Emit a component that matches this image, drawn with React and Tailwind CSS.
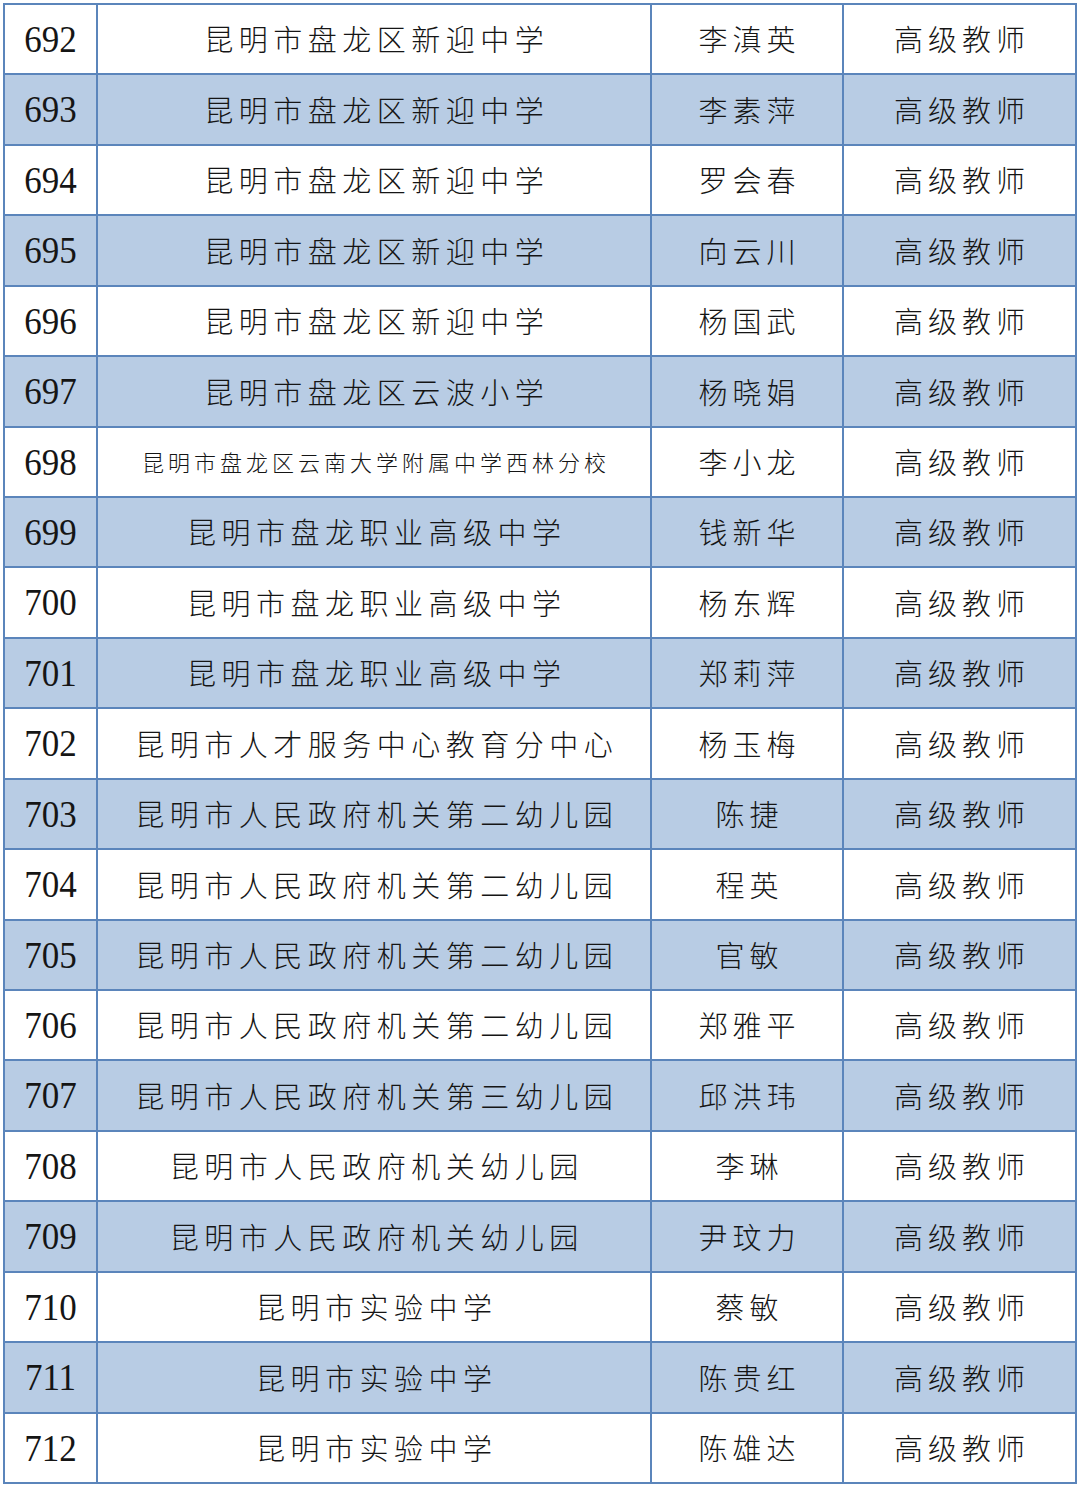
const rows = [
  ["692", "昆明市盘龙区新迎中学", "李滇英"],
  ["693", "昆明市盘龙区新迎中学", "李素萍"],
  ["694", "昆明市盘龙区新迎中学", "罗会春"],
  ["695", "昆明市盘龙区新迎中学", "向云川"],
  ["696", "昆明市盘龙区新迎中学", "杨国武"],
  ["697", "昆明市盘龙区云波小学", "杨晓娟"],
  ["698", "昆明市盘龙区云南大学附属中学西林分校", "李小龙", true],
  ["699", "昆明市盘龙职业高级中学", "钱新华"],
  ["700", "昆明市盘龙职业高级中学", "杨东辉"],
  ["701", "昆明市盘龙职业高级中学", "郑莉萍"],
  ["702", "昆明市人才服务中心教育分中心", "杨玉梅"],
  ["703", "昆明市人民政府机关第二幼儿园", "陈捷"],
  ["704", "昆明市人民政府机关第二幼儿园", "程英"],
  ["705", "昆明市人民政府机关第二幼儿园", "官敏"],
  ["706", "昆明市人民政府机关第二幼儿园", "郑雅平"],
  ["707", "昆明市人民政府机关第三幼儿园", "邱洪玮"],
  ["708", "昆明市人民政府机关幼儿园", "李琳"],
  ["709", "昆明市人民政府机关幼儿园", "尹玟力"],
  ["710", "昆明市实验中学", "蔡敏"],
  ["711", "昆明市实验中学", "陈贵红"],
  ["712", "昆明市实验中学", "陈雄达"],
]

export default function App() {
  return (
    <div className="w-[1080px] h-[1486px] bg-white pt-[3px] pl-[3px]">
      {/* table drawn as a grid: the blue background shows through the 2px gaps */}
      <div className="w-[1074px] h-[1481px] bg-[#5b85bb] p-[2px] grid grid-cols-[91px_552px_190px_231px] grid-rows-[repeat(21,1fr)] gap-[2px] text-[#151515]">
        {rows.map(([no, school, name, small], i) => {
          const bg = i % 2 === 1 ? "bg-[#b8cce4]" : "bg-white"
          return [
            <div key={no + "a"} className={`${bg} flex items-center justify-center text-[35px] pt-[2px]`}>
              <span className="font-['Liberation_Serif',serif] scale-y-[1.08]">{no}</span>
            </div>,
            <div key={no + "b"} className={`${bg} flex items-center justify-center font-['Noto_Sans_CJK_SC',sans-serif] font-light`}>
              {small ? (
                <span className="text-[22px] tracking-[4px] pl-[4px]">{school}</span>
              ) : (
                <span className="text-[29px] tracking-[5.5px] pl-[5.5px]">{school}</span>
              )}
            </div>,
            <div key={no + "c"} className={`${bg} flex items-center justify-center font-['Noto_Sans_CJK_SC',sans-serif] font-light text-[29px] tracking-[5px] pl-[5px]`}>
              {name}
            </div>,
            <div key={no + "d"} className={`${bg} flex items-center justify-center font-['Noto_Sans_CJK_SC',sans-serif] font-light text-[29px] tracking-[5px] pl-[5px]`}>
              高级教师
            </div>,
          ]
        })}
      </div>
    </div>
  )
}
